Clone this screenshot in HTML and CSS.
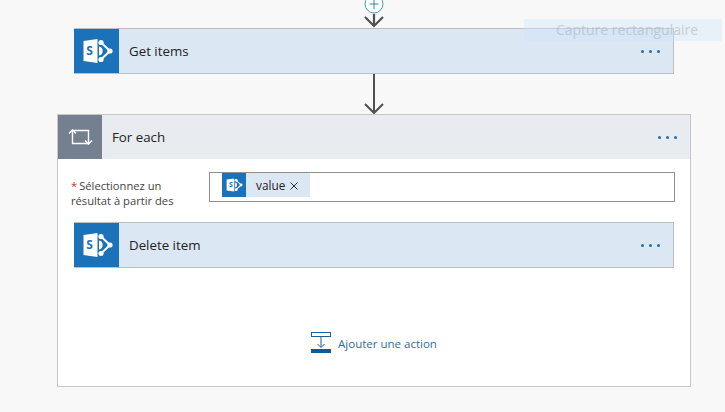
FILE: index.html
```html
<!DOCTYPE html>
<html lang="en">
<head>
  <meta charset="UTF-8">
  <title>Flow</title>
  <link rel="stylesheet" href="styles.css">
</head>
<body>
  <svg class="sp-icon-defs" width="0" height="0">
    <symbol id="sp-logo" viewBox="0 0 44 44">
      <path d="M8.5 12 L22.5 10 V34 L8.5 32 Z" fill="#fff"/>
      <path d="M26 13.5 L35 22 L26 30.5" stroke="#fff" stroke-width="2" fill="none"/>
      <path d="M24 17.5 a4.6 4.6 0 0 1 0 9 Z" fill="#fff"/>
      <circle cx="26" cy="13.5" r="2.6" fill="#fff"/>
      <circle cx="35" cy="22" r="2.6" fill="#fff"/>
      <circle cx="26" cy="30.5" r="2.6" fill="#fff"/>
    </symbol>
  </svg>

  <main class="flow">
    <svg class="arrow arrow-top" width="40" height="28" viewBox="0 0 40 28">
      <circle cx="20" cy="4" r="9" fill="#fff" stroke="#4a9bb0" stroke-width="1"/>
      <path d="M20 0 V9 M15.5 4 H24.5" stroke="#2f8aa3" stroke-width="1" fill="none"/>
      <path d="M20 14 V26 M11 17 L20 26 L29 17" stroke="#505050" stroke-width="2.2" fill="none"/>
    </svg>

    <div class="action">
      <div class="action-icon">
        <svg width="44" height="44"><use href="#sp-logo"/></svg>
        <span class="sp-letter">S</span>
      </div>
      <span class="action-title">Get items</span>
      <span class="dots"><i></i><i></i><i></i></span>
    </div>

    <svg class="arrow arrow-mid" width="40" height="40" viewBox="0 0 40 40">
      <path d="M20 0 V38 M11 30 L20 39 L29 30" stroke="#505050" stroke-width="2" fill="none"/>
    </svg>

    <section class="loop">
      <header class="loop-head">
        <div class="loop-icon">
          <svg width="44" height="44" viewBox="0 0 44 44" fill="none" stroke="#fff" stroke-width="1.4">
            <path d="M14.5 15 V28.5 H30.5 V15.5 H14.5"/>
            <path d="M11 18.5 L14.5 15 L18 18.5"/>
            <path d="M27 25.5 L30.5 29 L34 25.5"/>
          </svg>
        </div>
        <span class="loop-title">For each</span>
        <span class="dots"><i></i><i></i><i></i></span>
      </header>

      <div class="loop-body">
        <div class="field">
          <label class="field-label"><span class="req">*</span>Sélectionnez un<br>résultat à partir des</label>
          <div class="field-input">
            <span class="token">
              <span class="token-icon">
                <svg width="24" height="24"><use href="#sp-logo"/></svg>
                <span class="sp-letter">S</span>
              </span>
              <span class="token-text">value</span>
              <svg class="token-x" width="8" height="8" viewBox="0 0 8 8"><path d="M.5 .5 L7.5 7.5 M7.5 .5 L.5 7.5" stroke="#333" stroke-width="1"/></svg>
            </span>
          </div>
        </div>

        <div class="action">
          <div class="action-icon">
            <svg width="44" height="44"><use href="#sp-logo"/></svg>
            <span class="sp-letter">S</span>
          </div>
          <span class="action-title">Delete item</span>
          <span class="dots"><i></i><i></i><i></i></span>
        </div>

        <a class="add-action">
          <svg width="20" height="22" viewBox="0 0 20 22" fill="none" stroke="#1d5f93">
            <rect x=".5" y=".5" width="19" height="4"/>
            <path d="M10 5 V15 M6.5 12 L10 15.5 L13.5 12"/>
            <rect x="0" y="17" width="20" height="4" fill="#0f5a96" stroke="none"/>
          </svg>
          <span>Ajouter une action</span>
        </a>
      </div>
    </section>
  </main>

  <div class="snip-tip">Capture rectangulaire</div>
</body>
</html>
```
FILE: styles.css
```css
body {
  margin: 0;
  background-color: #f8f8f8;
  font-family: "Open Sans", "Noto Sans", sans-serif;
  color: #222;
  overflow: hidden;
}

.sp-icon-defs {
  position: absolute;
}

.flow {
  width: 634px;
  margin-left: 57px;
  display: flex;
  flex-direction: column;
  align-items: center;
}

.arrow {
  display: block;
  flex: none;
}

.action {
  width: 600px;
  height: 46px;
  box-sizing: border-box;
  display: flex;
  align-items: center;
  background: #dce7f4;
  border: 1px solid #bcbec2;
  border-left: none;
}

.action-icon {
  position: relative;
  width: 45px;
  height: 44px;
  background: #1c72b8;
  display: flex;
  align-items: center;
  justify-content: center;
}

.sp-letter {
  position: absolute;
  left: 10px;
  top: 14px;
  width: 11px;
  text-align: center;
  font-size: 12px;
  line-height: 16px;
  font-weight: 700;
  color: #1c72b8;
}

.action-title {
  flex: 1;
  margin-left: 10px;
  font-size: 13.3px;
}

.dots {
  display: flex;
  gap: 5px;
  margin-right: 13px;
}

.dots i {
  width: 3px;
  height: 3px;
  border-radius: 50%;
  background: #1f6fb0;
}

.loop {
  width: 634px;
  height: 273px;
  box-sizing: border-box;
  background: #fff;
  border: 1px solid #c6c6c6;
}

.loop-head {
  height: 44px;
  display: flex;
  align-items: center;
  background: #e8ebef;
}

.loop-icon {
  width: 44px;
  height: 44px;
  background: #74808f;
}

.loop-title {
  flex: 1;
  margin-left: 10px;
  font-size: 13.3px;
}

.loop-body {
  display: flex;
  flex-direction: column;
  align-items: center;
}

.field {
  width: 600px;
  margin-top: 13px;
  display: flex;
  align-items: flex-start;
}

.field-label {
  width: 138px;
  margin-left: -3px;
  margin-top: 6px;
  font-size: 11.2px;
  line-height: 15px;
  color: #444;
}

.req {
  color: #c0392b;
  margin-right: 2px;
}

.field-input {
  flex: 1;
  height: 30px;
  margin-right: -1px;
  box-sizing: border-box;
  border: 1px solid #8f8f8f;
  background: #fff;
  padding-left: 12px;
}

.token {
  display: inline-flex;
  align-items: center;
  height: 24px;
  background: #dce7f4;
  padding-right: 12px;
}

.token-icon {
  position: relative;
  width: 24px;
  height: 24px;
  background: #1c72b8;
}

.token-icon svg {
  display: block;
}

.token-icon .sp-letter {
  left: 5px;
  top: 8px;
  width: 8px;
  font-size: 7px;
  line-height: 8px;
}

.token-text {
  margin-left: 10px;
  font-size: 11.8px;
}

.token-x {
  margin-left: 5px;
  margin-top: 2px;
}

.field + .action {
  margin-top: 14px;
}

.add-action {
  margin-top: 64px;
  display: flex;
  align-items: center;
  gap: 7px;
  font-size: 11.5px;
  color: #2b6f9f;
}

.snip-tip {
  position: absolute;
  left: 524px;
  top: 19px;
  width: 198px;
  height: 22px;
  box-sizing: border-box;
  padding-left: 8px;
  line-height: 22px;
  text-align: center;
  font-size: 14px;
  color: rgba(165, 175, 185, 0.55);
  background: rgba(205, 230, 250, 0.4);
}
```
